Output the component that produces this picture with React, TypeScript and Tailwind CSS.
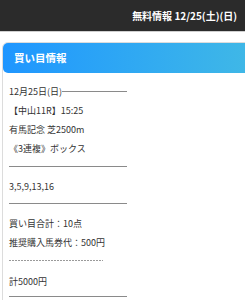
import React from 'react';

const font = { fontFamily: '"Noto Sans CJK JP", "Noto Sans", sans-serif' };

const Hr = () => <div className="h-px w-[118px] bg-[#8a8a8a]" />;

export default function App() {
  return (
    <div className="w-[245px] h-[300px] overflow-hidden bg-white text-[#333]" style={font}>
      <div className="h-[32px] bg-[#2b2b2b] border-b border-[#cfcfcf] flex items-center justify-end pr-[8px]">
        <span className="text-white text-[10px] font-bold">無料情報 12/25(土)(日)</span>
      </div>
      <div className="mt-[10px] ml-[2px] mr-[-8px] border border-[#dcdcdc] rounded-[6px] pb-[24px]">
        <div className="h-[30px] rounded-l-[5px] bg-gradient-to-r from-[#1f96ff] to-[#40b8e6] flex items-center pl-[11px]">
          <span className="text-white text-[10.5px] font-bold">買い目情報</span>
        </div>
        <div className="pl-[6px] pt-[9px] text-[9px] leading-[19px]">
          <div className="flex items-center w-[118px]">
            <span>12月25日(日)</span>
            <div className="h-px flex-1 bg-[#8a8a8a]" />
          </div>
          <div>【中山11R】15:25</div>
          <div>有馬記念 芝2500m</div>
          <div>《3連複》ボックス</div>
          <div className="pt-[8px] pb-[10px]"><Hr /></div>
          <div>3,5,9,13,16</div>
          <div className="pt-[7px] pb-[10px]"><Hr /></div>
          <div>買い目合計：10点</div>
          <div>推奨購入馬券代：500円</div>
          <div className="pt-[8px] pb-[11px]">
            <div className="h-px w-[94px] bg-[repeating-linear-gradient(to_right,#9a9a9a_0_2px,transparent_2px_3px)]" />
          </div>
          <div>計5000円</div>
          <div className="pt-[5px]"><Hr /></div>
        </div>
      </div>
    </div>
  );
}
